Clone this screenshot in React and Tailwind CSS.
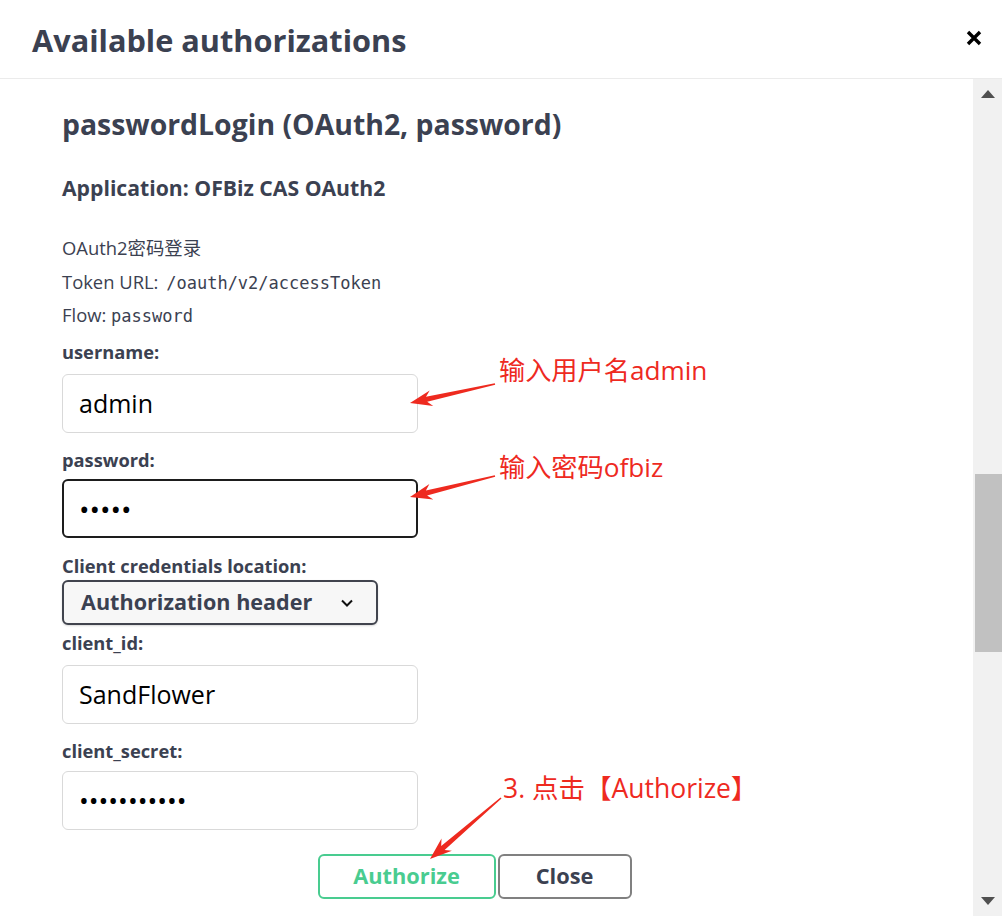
import React from 'react'

const Arrow = ({ tip, tail }) => {
  const [tx, ty] = tip
  const [sx, sy] = tail
  const dx = sx - tx
  const dy = sy - ty
  const len = Math.hypot(dx, dy)
  const ux = dx / len
  const uy = dy / len
  const nx = -uy
  const ny = ux
  const hl = 22
  const hw = 8
  const sw = 2.6
  const p = (a, b) => `${(tx + a * ux + b * nx).toFixed(1)},${(ty + a * uy + b * ny).toFixed(1)}`
  const points = [
    p(0, 0),
    p(hl, hw),
    p(hl - 5, sw),
    `${(sx + 0.8 * nx).toFixed(1)},${(sy + 0.8 * ny).toFixed(1)}`,
    `${(sx - 0.8 * nx).toFixed(1)},${(sy - 0.8 * ny).toFixed(1)}`,
    p(hl - 5, -sw),
    p(hl, -hw),
  ].join(' ')
  return <polygon points={points} fill="#ee2a1f" />
}

const Label = ({ children, className = '' }) => (
  <div className={`text-[18.3px] leading-[22px] font-bold text-[#3b4151] ${className}`}>{children}</div>
)

const TextInput = ({ children, focused, className = '' }) => (
  <div
    className={`w-[356px] h-[59px] rounded-[6px] bg-white flex items-center text-black ${
      focused ? 'border-2 border-[#1d1d1d] pl-[15px]' : 'border border-[#d9d9d9] pl-[16px]'
    } ${className}`}
  >
    {children}
  </div>
)

export default function App() {
  return (
    <div className="relative w-[1002px] h-[916px] bg-white overflow-hidden flex flex-col font-['Open_Sans','Noto_Sans_CJK_SC',sans-serif]">
      <header className="h-[79px] shrink-0 border-b border-[#ebebeb] flex items-center justify-between pl-[32px] pr-[20px]">
        <h2 className="text-[30.7px] leading-[36px] font-bold text-[#3b4151] mt-[2px]">Available authorizations</h2>
        <svg width="16" height="16" viewBox="0 0 16 16" className="mt-[-2px]">
          <path d="M2 2 L14 14 M14 2 L2 14" stroke="#000" strokeWidth="3.4" strokeLinecap="butt" />
        </svg>
      </header>

      <div className="flex flex-1 min-h-0">
        <div className="flex-1 pl-[62px] flex flex-col items-start">
          <h4 className="mt-[28px] text-[28.4px] leading-[34px] font-bold text-[#3b4151]">
            passwordLogin (OAuth2, password)
          </h4>
          <h6 className="mt-[34px] text-[21.2px] leading-[26px] font-bold text-[#3b4151]">
            Application: OFBiz CAS OAuth2
          </h6>
          <p className="mt-[35px] text-[18.4px] leading-[24px] text-[#3b4151]">OAuth2密码登录</p>
          <p className="mt-[10px] text-[18.4px] leading-[24px] text-[#3b4151]">
            Token URL:{' '}
            <code className="font-['DejaVu_Sans_Mono',monospace] text-[17px] ml-[3px]">/oauth/v2/accessToken</code>
          </p>
          <p className="mt-[8px] text-[18.4px] leading-[24px] text-[#3b4151]">
            Flow: <code className="font-['DejaVu_Sans_Mono',monospace] text-[17px]">password</code>
          </p>

          <Label className="mt-[13px]">username:</Label>
          <TextInput className="mt-[11px]">
            <span className="text-[25px]">admin</span>
          </TextInput>

          <Label className="mt-[16px]">password:</Label>
          <TextInput focused className="mt-[8px]">
            <span className="text-[28px] tracking-[0px]">•••••</span>
          </TextInput>

          <Label className="mt-[17px]">Client credentials location:</Label>
          <div className="mt-[3px] w-[316px] h-[45px] rounded-[6px] border-2 border-[#41444e] bg-[#f7f7f7] shadow-[0_1px_2px_rgba(0,0,0,0.15)] flex items-center justify-between pl-[17px] pr-[22px]">
            <span className="text-[21.6px] font-bold text-[#3b4151]">Authorization header</span>
            <svg width="14" height="10" viewBox="0 0 14 10">
              <path d="M2 2.5 L7 7.5 L12 2.5" fill="none" stroke="#111" strokeWidth="2" />
            </svg>
          </div>

          <Label className="mt-[7px]">client_id:</Label>
          <TextInput className="mt-[11px]">
            <span className="text-[25px]">SandFlower</span>
          </TextInput>

          <Label className="mt-[16px]">client_secret:</Label>
          <TextInput className="mt-[9px]">
            <span className="text-[26px] tracking-[0px]">•••••••••••</span>
          </TextInput>

          <div className="mt-[24px] w-full flex justify-center gap-[2px] pr-[86px]">
            <button className="w-[178px] h-[45px] rounded-[6px] border-2 border-[#49cc90] bg-white text-[21.8px] font-bold text-[#49cc90]">
              Authorize
            </button>
            <button className="w-[134px] h-[45px] rounded-[6px] border-2 border-[#808080] bg-white text-[21.8px] font-bold text-[#3b4151]">
              Close
            </button>
          </div>
        </div>

        <div className="w-[29px] shrink-0 bg-[#f1f1f1] flex flex-col items-end">
          <div className="w-full h-[29px] flex items-center justify-center">
            <svg width="14" height="8" viewBox="0 0 14 8">
              <path d="M0 8 L7 0 L14 8 Z" fill="#505050" />
            </svg>
          </div>
          <div className="h-[366px]" />
          <div className="w-[27px] h-[178px] bg-[#c1c1c1]" />
          <div className="flex-1" />
          <div className="w-full h-[27px] flex items-start justify-center pt-[8px]">
            <svg width="14" height="8" viewBox="0 0 14 8">
              <path d="M0 0 L14 0 L7 8 Z" fill="#505050" />
            </svg>
          </div>
        </div>
      </div>

      <div className="absolute inset-0 pointer-events-none">
        <svg width="1002" height="916" className="absolute left-0 top-0">
          <Arrow tip={[410, 403]} tail={[495, 384]} />
          <Arrow tip={[410, 497]} tail={[495, 476]} />
          <Arrow tip={[430, 859]} tail={[501, 798]} />
        </svg>
        <div className="absolute left-[499px] top-[354px] text-[26.2px] leading-[32px] text-[#ee2a1f]">输入用户名admin</div>
        <div className="absolute left-[499px] top-[451px] text-[26.2px] leading-[32px] text-[#ee2a1f]">输入密码ofbiz</div>
        <div className="absolute left-[503px] top-[772px] text-[26.5px] leading-[32px] text-[#ee2a1f]">3. 点击【Authorize】</div>
      </div>
    </div>
  )
}
